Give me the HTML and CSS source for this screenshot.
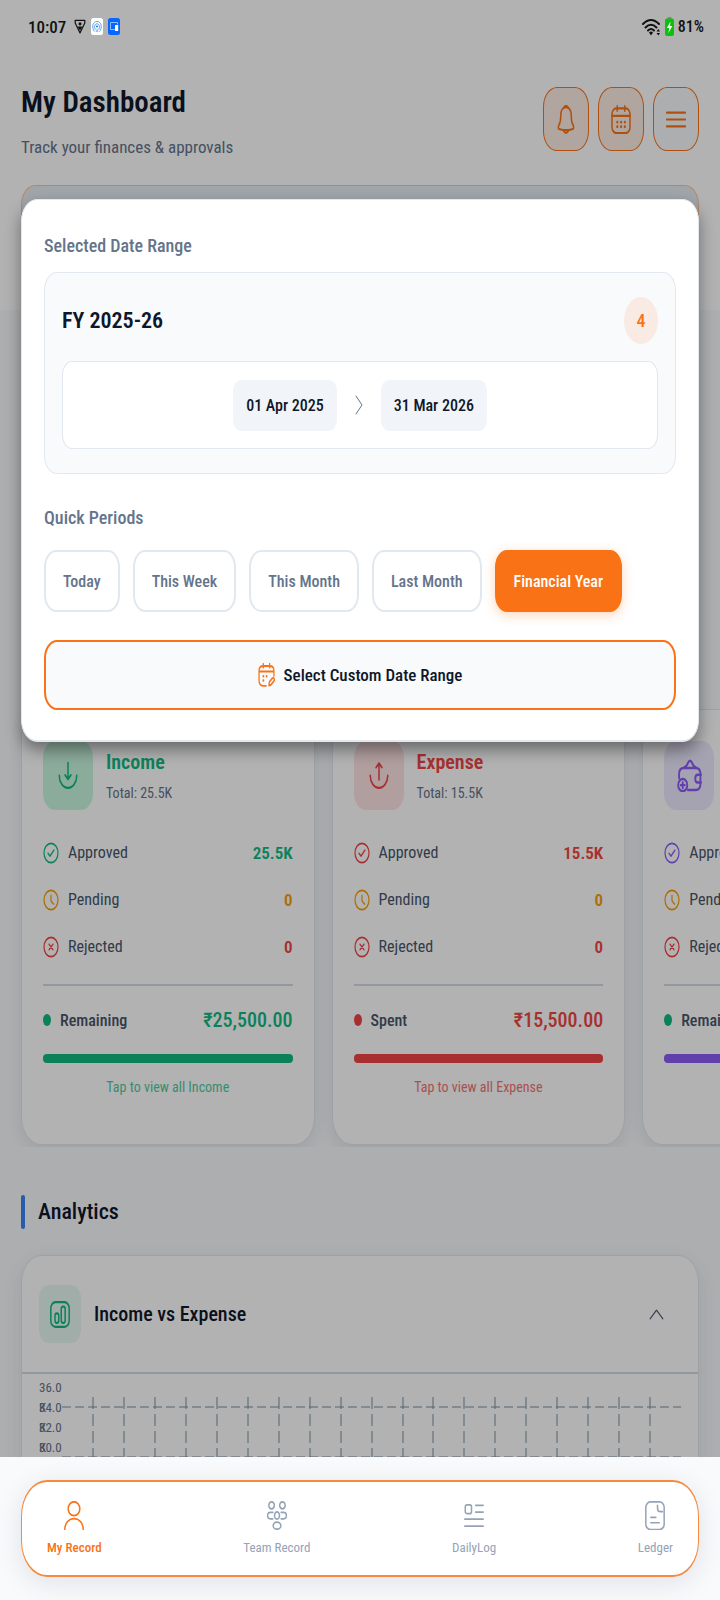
FILE: index.html
```html
<!DOCTYPE html>
<html lang="en">
<head>
<meta charset="utf-8">
<meta name="viewport" content="width=device-width, initial-scale=1">
<title>My Dashboard</title>
<link rel="stylesheet" href="styles.css">
</head>
<body>
<svg class="defs" aria-hidden="true">
  <symbol id="check" viewBox="0 0 24 24" preserveAspectRatio="none"><circle cx="12" cy="12" r="10.5"/><path d="M7.5 12.4l3 3 6-6.6"/></symbol>
  <symbol id="clock" viewBox="0 0 24 24" preserveAspectRatio="none"><circle cx="12" cy="12" r="10.5"/><path d="M12 7v5.2q0 1 1 1.8l3 2.4"/></symbol>
  <symbol id="cross" viewBox="0 0 24 24" preserveAspectRatio="none"><circle cx="12" cy="12" r="10.5"/><path d="M9 9l6 6M15 9l-6 6"/></symbol>
</svg>
<div class="app">
  <div class="status">
    <div class="status-group">
      <span class="time">10:07</span>
      <svg class="s-icon" viewBox="0 0 12 14" preserveAspectRatio="none"><path d="M1.2 1.2h9.6v2.5L6 13 1.2 3.7z" fill="none" stroke="#111" stroke-width="1.2" stroke-linejoin="round"/><path d="M3.5 7h5L6 11z" fill="#111"/><circle cx="6" cy="4.5" r="1.5" fill="#111"/></svg>
      <svg class="s-app" viewBox="0 0 12 17" preserveAspectRatio="none"><rect width="12" height="17" rx="2.5" fill="#fff"/><g fill="none" stroke="#4d9be8" stroke-width=".9"><path d="M3.2 13.2C.6 10.2 1.2 3.5 6 3.5s5.4 6.7 2.8 9.7"/><path d="M4.3 11.5C2.8 9.5 3.5 5.8 6 5.8s3.2 3.7 1.7 5.7"/></g><circle cx="6" cy="8.6" r="1" fill="#1677dc"/><path d="M6 10l-1.5 4h3z" fill="#8fc3f3"/></svg>
      <svg class="s-app" viewBox="0 0 12 17" preserveAspectRatio="none"><rect width="12" height="17" rx="2.5" fill="#0866ff"/><path d="M6.5 11.5H2.5V4.5h7V6" fill="none" stroke="#9cc4ff" stroke-width=".9"/><rect x="7" y="7" width="3.2" height="6" rx=".6" fill="#fff"/></svg>
    </div>
    <div class="status-group right">
      <svg class="wifi" viewBox="0 0 19 18" preserveAspectRatio="none"><g fill="none" stroke="#111" stroke-width="2"><path d="M1 6Q9 -2 17 6"/><path d="M3.5 9.5Q9 4 14.5 9.5"/><path d="M6 12.5Q9 9.5 12 12.5"/></g><path d="M7 14.5q2-2 4 0L9 17.5z" fill="#111"/><path d="M14.5 13.5L16.3 11l1.8 2.5zM14.5 15h3.6l-1.8 2.5z" fill="#111"/></svg>
      <svg class="battery" viewBox="0 0 9 19" preserveAspectRatio="none"><rect x="2.5" width="4" height="3" rx="1" fill="#7d8a7d"/><rect y="1.5" width="9" height="17.5" rx="2" fill="#0bc20b"/><path d="M5.5 4.5L1.8 11h2.4l-.7 5L7.3 9H4.9z" fill="#fff"/></svg>
      <span class="pct">81%</span>
    </div>
  </div>

  <main class="main">
    <header class="header">
      <div class="header-row">
        <div>
          <h1>My Dashboard</h1>
          <p class="subtitle">Track your finances &amp; approvals</p>
        </div>
        <div class="actions">
          <button class="action tint" aria-label="Notifications"><svg viewBox="0 0 24 24" preserveAspectRatio="none"><path d="M12 1.8c-4 0-6.3 2.9-6.3 7 0 4-.8 6-2 7.5-1.6 2.200-1 3.400 1 3.800 5 1 9.600 1 14.600 0 2-.4 2.600-1.600 1-3.800-1.200-1.500-2-3.500-2-7.500 0-4.100-2.300-7-6.300-7z"/><path d="M9.800 1.800q2.200-2 4.400 0M8.500 20.800q3.500 4.400 7 0"/></svg></button>
          <button class="action tint" aria-label="Calendar"><svg viewBox="0 0 24 24" preserveAspectRatio="none"><rect x="1.2" y="2.800" width="21.600" height="20.400" rx="5"/><path d="M1.200 9h21.600M7.500.9v4M16.500.9v4"/><path class="dots" d="M7.500 14.200h.2M12 14.200h.2M16.500 14.200h.2M7.500 18h.2M12 18h.2M16.500 18h.2"/></svg></button>
          <button class="action" aria-label="Menu"><svg viewBox="0 0 24 24" preserveAspectRatio="none"><path d="M.8 6.300h22.400M.8 12h22.400M.8 17.700h22.400"/></svg></button>
        </div>
      </div>
      <section class="summary"></section>
    </header>

    <section class="overview"></section>

    <section class="cards">
      <article class="card green">
        <div class="card-head">
          <span class="tile"><svg viewBox="0 0 24 24" preserveAspectRatio="none"><path d="M12 1.500v14M8.500 12l3.500 3.700 3.500-3.700M1.500 12.500a10.500 10.500 0 0 0 21 0"/></svg></span>
          <div><h2>Income</h2><p>Total: 25.5K</p></div>
        </div>
        <dl>
          <div class="row main-tone"><svg><use href="#check"/></svg><dt>Approved</dt><dd>25.5K</dd></div>
          <div class="row amber"><svg><use href="#clock"/></svg><dt>Pending</dt><dd>0</dd></div>
          <div class="row red-tone"><svg><use href="#cross"/></svg><dt>Rejected</dt><dd>0</dd></div>
        </dl>
        <div class="total"><i class="dot"></i><span>Remaining</span><b>₹25,500.00</b></div>
        <div class="bar"></div>
        <p class="tap">Tap to view all Income</p>
      </article>
      <article class="card red">
        <div class="card-head">
          <span class="tile"><svg viewBox="0 0 24 24" preserveAspectRatio="none"><path d="M12 16V2M8.500 5.500L12 1.800l3.500 3.700M1.500 12.500a10.500 10.500 0 0 0 21 0"/></svg></span>
          <div><h2>Expense</h2><p>Total: 15.5K</p></div>
        </div>
        <dl>
          <div class="row main-tone"><svg><use href="#check"/></svg><dt>Approved</dt><dd>15.5K</dd></div>
          <div class="row amber"><svg><use href="#clock"/></svg><dt>Pending</dt><dd>0</dd></div>
          <div class="row red-tone"><svg><use href="#cross"/></svg><dt>Rejected</dt><dd>0</dd></div>
        </dl>
        <div class="total"><i class="dot"></i><span>Spent</span><b>₹15,500.00</b></div>
        <div class="bar"></div>
        <p class="tap">Tap to view all Expense</p>
      </article>
      <article class="card violet">
        <div class="card-head">
          <span class="tile"><svg class="wallet" viewBox="0 0 24 24" preserveAspectRatio="none"><path d="M2 14V11c0-3 1.500-4.500 4.500-4.500H18c3 0 4.500 1.500 4.500 4.500v7c0 3-1.500 4.500-4.500 4.500h-7.500M6.500 6.300Q10 5 10.500 2.800q2-3 4 0Q15 5 18.500 6.300"/><path d="M23 11.500h-3q-2.500 0-2.500 2.800t2.500 2.800h3"/><circle cx="5.500" cy="19" r="4.400"/><path d="M5.500 17v4M3.500 19h4"/></svg></span>
        </div>
        <dl>
          <div class="row main-tone"><svg><use href="#check"/></svg><dt>Approved</dt></div>
          <div class="row amber"><svg><use href="#clock"/></svg><dt>Pending</dt></div>
          <div class="row red-tone"><svg><use href="#cross"/></svg><dt>Rejected</dt></div>
        </dl>
        <div class="total"><i class="dot emerald"></i><span>Remaining</span></div>
        <div class="bar"></div>
      </article>
    </section>

    <section class="analytics">
      <h2 class="section-title">Analytics</h2>
      <article class="chart-card">
        <div class="chart-head">
          <span class="chart-tile"><svg viewBox="0 0 24 24" preserveAspectRatio="none"><rect x="1" y="1" width="22" height="22" rx="5.500"/><rect x="6" y="11" width="4.500" height="8.500" rx="2.200"/><rect x="13.500" y="4.800" width="4.700" height="14.700" rx="2.300"/></svg></span>
          <h3>Income vs Expense</h3>
          <button class="collapse" aria-label="Collapse"><svg viewBox="0 0 14 10" preserveAspectRatio="none"><path d="M1 9l6-8 6 8"/></svg></button>
        </div>
        <div class="chart">
          <div class="axis"><span>36.0 K</span><span>34.0 K</span><span>32.0 K</span><span>30.0 K</span></div>
          <svg class="grid" viewBox="0 0 619 76" preserveAspectRatio="none">
            <path class="v" d="M31 0v76M62 0v76M93 0v76M124 0v76M155 0v76M186 0v76M217 0v76M248 0v76M279 0v76M310 0v76M341 0v76M371 0v76M402 0v76M433 0v76M464 0v76M495 0v76M526 0v76M557 0v76M588 0v76"/>
            <path class="h" d="M0 10h619M0 60h619"/>
          </svg>
        </div>
      </article>
    </section>

    <div class="overlay">
      <section class="modal" role="dialog" aria-label="Date range">
        <h2 class="label">Selected Date Range</h2>
        <div class="range">
          <div class="range-head"><strong>FY 2025-26</strong><span class="badge">4</span></div>
          <div class="dates">
            <span class="date">01 Apr 2025</span>
            <svg viewBox="0 0 8 20" preserveAspectRatio="none"><path d="M1 1l6 9-6 9"/></svg>
            <span class="date">31 Mar 2026</span>
          </div>
        </div>
        <h2 class="label quick">Quick Periods</h2>
        <div class="periods">
          <button>Today</button><button>This Week</button><button>This Month</button><button>Last Month</button><button class="active">Financial Year</button>
        </div>
        <button class="custom"><svg viewBox="0 0 24 24" preserveAspectRatio="none"><path d="M11.500 22.800H7q-5.500 0-5.500-5.500V8q0-5 5.500-5h10q5.500 0 5.500 5v5M1.500 8.500h21M7.500.7v4M16.500.7v4"/><path class="dots" d="M7.500 13.200h.2M12 13.200h.2M7.500 17.500h.2"/><path d="M15.500 22.500l.5-3.500 4.500-4q1.500-.5 2.300.8t-.3 2.200l-4.500 4z"/></svg>Select Custom Date Range</button>
      </section>
    </div>
  </main>

  <footer class="footer">
    <nav class="nav">
      <a href="#" class="current"><svg viewBox="0 0 24 30" preserveAspectRatio="none"><ellipse cx="12" cy="8" rx="7" ry="7.200"/><path d="M1 29.500c0-15 22-15 22 0"/></svg>My Record</a>
      <a href="#"><svg viewBox="0 0 24 30" preserveAspectRatio="none"><ellipse cx="5.500" cy="4.500" rx="3.300" ry="3.700"/><ellipse cx="18.500" cy="4.500" rx="3.300" ry="3.700"/><ellipse cx="12" cy="15" rx="3" ry="3.700"/><ellipse cx="12" cy="25.500" rx="4.600" ry="3.700"/><path d="M7 11.800H4q-3.300 0-3.300 3.300T4 18.400h3M17 11.800h3q3.300 0 3.300 3.300T20 18.400h-3"/></svg>Team Record</a>
      <a href="#"><svg viewBox="0 0 24 30" preserveAspectRatio="none"><rect x="1.500" y="4" width="7.500" height="9" rx="2"/><path d="M14 4.500H23M14 11.500H23M1 18.800h22M1 26h22"/></svg>DailyLog</a>
      <a href="#"><svg viewBox="0 0 24 30" preserveAspectRatio="none"><rect x="1" y="1" width="22" height="28.500" rx="5.500"/><path d="M15 4.500v3q0 3.500 3.500 3.500H21M7 17h6M7 22.500h10"/></svg>Ledger</a>
    </nav>
  </footer>
</div>
</body>
</html>
```
FILE: styles.css
```css
:root {
  --ink: #0f172a;
  --slate: #64748b;
  --line: #e2e8f0;
  --orange: #f97316;
  --green: #10b981;
  --red: #ef4444;
  --amber: #f59e0b;
  --violet: #8b5cf6;
}

* { box-sizing: border-box; margin: 0; }

body {
  font-family: "Roboto Condensed", Roboto, sans-serif;
  color: var(--ink);
  background: #f8fafc;
}

button { font: inherit; color: inherit; padding: 0; background: none; border: 0; }
svg { flex: none; fill: none; stroke: currentColor; stroke-width: 1.8; stroke-linecap: round; stroke-linejoin: round; }
.dots { stroke-width: 2.4; }
.defs { display: none; }

.app { display: flex; flex-direction: column; height: 100vh; position: relative; overflow: hidden; }

/* Status bar */
.status {
  position: absolute; inset: 0 0 auto; z-index: 3;
  height: 53px; padding: 0 16px 0 28px;
  display: flex; justify-content: space-between; align-items: center;
  color: #111;
}
.status svg { stroke: none; }
.status-group { display: flex; align-items: center; gap: 5px; }
.status-group.right { gap: 4px; }
.time { font-size: 17px; font-weight: 500; margin-right: 3px; }
.pct { font-size: 16px; font-weight: 500; }
.s-icon { width: 12px; height: 15px; }
.s-app { width: 12px; height: 17px; }
.wifi { width: 19px; height: 18px; }
.battery { width: 9px; height: 19px; }

/* Header */
.main { flex: 1; min-height: 0; position: relative; overflow: hidden; }
.header { background: #fff; padding: 80px 21px 17px; }
.header-row { display: flex; justify-content: space-between; align-items: center; margin-bottom: 27px; height: 78px; }
h1 { font-size: 29px; line-height: 44px; font-weight: 600; }
.subtitle { font-size: 17px; line-height: 24px; margin-top: 11px; color: var(--slate); }
.actions { display: flex; gap: 9px; }
.action {
  width: 46px; height: 64px; display: grid; place-items: center;
  border: 1px solid var(--orange); border-radius: 14px / 20px;
  color: var(--orange); background: #f8fafc;
}
.action.tint { background: #fdeee4; }
.action svg { width: 20px; height: 29px; }
.summary { height: 108px; border: 1px solid #fdc49c; border-radius: 14px / 20px; background: #e6ecf2; }
.overview { height: 399px; }

/* Finance cards */
.cards { display: flex; gap: 17px; padding: 0 0 2px 21px; overflow: hidden; }
.card {
  flex: 0 0 42%; padding: 30px 21px 47px;
  background: #fff; border: 1px solid var(--line); border-radius: 20px / 28px;
  box-shadow: 0 6px 18px rgba(15, 23, 42, .09);
}
.green { --tone: var(--green); --soft: #c8f5df; }
.red { --tone: var(--red); --soft: #fee2e2; }
.violet { --tone: var(--violet); --soft: #ede9fe; }
.card-head { display: flex; gap: 13px; height: 70px; align-items: center; }
.tile { width: 50px; height: 69px; display: grid; place-items: center; border-radius: 12px / 17px; background: var(--soft); color: var(--tone); }
.tile svg { width: 20px; height: 28px; }
.tile .wallet { width: 25px; height: 33px; }
.card h2 { font-size: 20px; line-height: 30px; font-weight: 600; color: var(--tone); }
.card-head p { font-size: 14px; line-height: 20px; margin-top: 6px; color: var(--slate); }
dl { margin-top: 19px; padding-bottom: 14px; border-bottom: 2px solid #d3dae3; }
.row { display: flex; align-items: center; gap: 9px; height: 47px; color: var(--row); }
.main-tone { --row: var(--tone); }
.amber { --row: var(--amber); }
.red-tone { --row: var(--red); }
.row svg { width: 16px; height: 22px; }
.row dt { font-size: 16px; color: #475569; }
.row dd { margin-left: auto; font-size: 17px; font-weight: 600; }
.total { display: flex; align-items: center; gap: 9px; height: 68px; }
.total span { font-size: 16px; font-weight: 500; color: #475569; }
.total b { margin-left: auto; font-size: 20px; font-weight: 500; color: var(--tone); }
.dot { width: 8px; height: 12px; border-radius: 50%; background: var(--tone); }
.dot.emerald { background: var(--green); }
.bar { height: 9px; border-radius: 4px; background: var(--tone); }
.tap { margin-top: 14px; text-align: center; font-size: 14px; line-height: 20px; color: var(--tone); opacity: .75; }

/* Analytics */
.analytics { padding: 48px 21px 0; }
.section-title { display: flex; align-items: center; gap: 13px; font-size: 22px; line-height: 34px; font-weight: 500; }
.section-title::before { content: ""; width: 4px; height: 34px; border-radius: 2px; background: #3b82f6; }
.chart-card { margin-top: 26px; height: 360px; background: #fff; border: 1px solid var(--line); border-radius: 20px / 28px; box-shadow: 0 6px 24px rgba(15, 23, 42, .09); }
.chart-head { display: flex; align-items: center; gap: 13px; height: 118px; padding: 0 34px 0 17px; border-bottom: 2px solid #d3dae3; }
.chart-tile { width: 42px; height: 58px; display: grid; place-items: center; border-radius: 10px / 14px; background: #e7f8f2; color: var(--green); }
.chart-tile svg { width: 20px; height: 27px; }
h3 { font-size: 20px; font-weight: 500; }
.collapse { margin-left: auto; color: #475569; display: flex; }
.collapse svg { width: 15px; height: 11px; stroke-width: 1; }
.chart { display: flex; padding: 4px 17px 0; }
.axis { width: 23px; display: flex; flex-direction: column; font-size: 13px; line-height: 20px; color: var(--slate); }
.axis span { height: 20px; width: 20px; }
.grid { flex: 1; min-width: 0; height: 76px; margin-top: 19px; stroke: #78909c; stroke-width: 1; stroke-linecap: butt; }
.grid .v { stroke-dasharray: 12 5; }
.grid .h { stroke-dasharray: 9 4; }

/* Date range dialog */
.overlay { position: absolute; inset: 0; background: rgba(0, 0, 0, .3); padding: 199px 21px 0; }
.modal {
  padding: 30px 22px; background: #fff;
  border: 1px solid var(--line); border-bottom-width: 2px; border-radius: 16px / 22px;
  box-shadow: 0 8px 16px rgba(0, 0, 0, .4);
}
.label { font-size: 18px; line-height: 32px; font-weight: 500; color: var(--slate); }
.range { margin-top: 10px; padding: 24px 17px; background: #f8fafc; border: 1px solid var(--line); border-radius: 13px / 18px; }
.range-head { display: flex; justify-content: space-between; align-items: center; }
.range-head strong { font-size: 22px; font-weight: 600; }
.badge { width: 34px; height: 47px; display: grid; place-items: center; border-radius: 50%; background: #f9ebe3; color: var(--orange); font-size: 18px; font-weight: 500; }
.dates { margin-top: 17px; height: 88px; display: flex; align-items: center; justify-content: center; gap: 18px; background: #fff; border: 1px solid var(--line); border-radius: 10px / 14px; }
.dates svg { width: 8px; height: 20px; color: var(--slate); stroke-width: 1; }
.date { padding: 0 13px; line-height: 51px; border-radius: 8px / 11px; background: #f1f5f9; font-size: 16px; font-weight: 500; }
.quick { margin-top: 28px; }
.periods { display: flex; gap: 13px; margin-top: 16px; }
.periods button { height: 62px; padding: 0 17px; border: 2px solid var(--line); border-radius: 12px / 17px; color: var(--slate); font-size: 16px; font-weight: 500; white-space: nowrap; }
.periods .active { color: #fff; background: var(--orange); border-color: var(--orange); box-shadow: 0 3px 12px rgba(249, 115, 22, .3); }
.custom { margin-top: 28px; width: 100%; height: 70px; display: flex; align-items: center; justify-content: center; gap: 9px; border: 2px solid var(--orange); border-radius: 13px / 18px; background: #f8fafc; font-size: 17px; font-weight: 500; }
.custom svg { width: 17px; height: 24px; color: var(--orange); }

/* Bottom navigation */
.footer { padding: 23px 21px; background: #f8fafc; }
.nav { display: flex; justify-content: space-between; align-items: center; height: 97px; padding: 0 25px; background: #fff; border: 2px solid #f68b3f; border-width: 2px 1px; border-radius: 26px / 36px; box-shadow: 0 6px 28px rgba(15, 23, 42, .1); }
.nav a { display: flex; flex-direction: column; align-items: center; gap: 8px; padding-top: 2px; font-size: 13px; line-height: 20px; color: #94a3b8; text-decoration: none; }
.nav svg { width: 20px; height: 29px; }
.nav .current { color: var(--orange); font-weight: 500; }
```
